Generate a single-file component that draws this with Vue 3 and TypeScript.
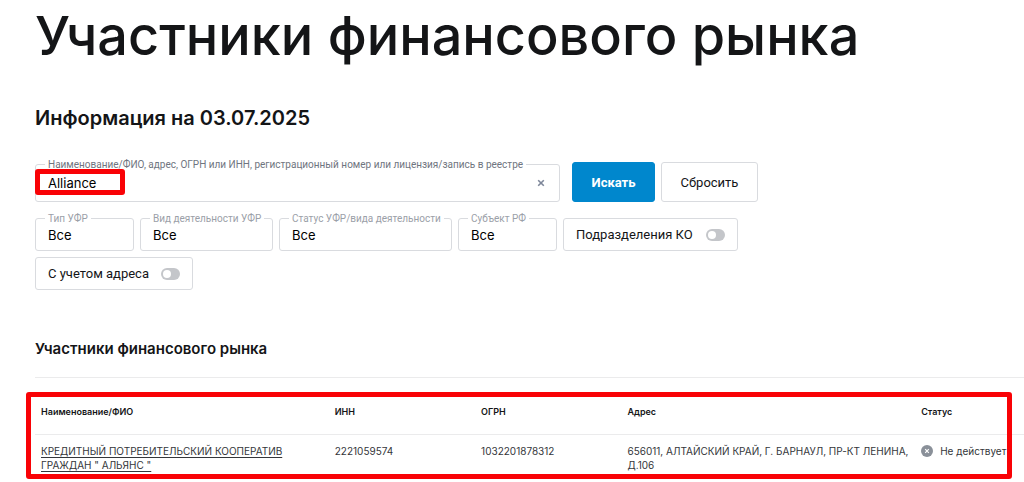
<script setup lang="ts">
import { ref } from 'vue'

interface Filter {
  id: string
  label: string
  size: string
}

interface Participant {
  name: string
  inn: string
  ogrn: string
  address: string
  status: string
}

const query = ref('Alliance')
const withBranches = ref(false)
const withAddress = ref(false)

const filters: Filter[] = [
  { id: 'type', label: 'Тип УФР', size: 'small' },
  { id: 'activity', label: 'Вид деятельности УФР', size: 'medium' },
  { id: 'status', label: 'Статус УФР/вида деятельности', size: 'large' },
  { id: 'region', label: 'Субъект РФ', size: 'small' },
]

const participants: Participant[] = [
  {
    name: 'КРЕДИТНЫЙ ПОТРЕБИТЕЛЬСКИЙ КООПЕРАТИВ ГРАЖДАН " АЛЬЯНС "',
    inn: '2221059574',
    ogrn: '1032201878312',
    address: '656011, АЛТАЙСКИЙ КРАЙ, Г. БАРНАУЛ, ПР-КТ ЛЕНИНА, Д.106',
    status: 'Не действует',
  },
]
</script>

<template>
  <main class="page">
    <h1 class="title">Участники финансового рынка</h1>
    <h2 class="date">Информация на 03.07.2025</h2>

    <form class="search" @submit.prevent>
      <div class="search-row">
        <div class="field query">
          <label class="caption" for="query">Наименование/ФИО, адрес, ОГРН или ИНН, регистрационный номер или лицензия/запись в реестре</label>
          <input id="query" v-model="query" class="control" type="text" />
          <button class="clear" type="button" aria-label="Очистить" @click="query = ''">
            <svg viewBox="0 0 8 8" width="8" height="8"><path d="M1.2 1.2 6.8 6.8M6.8 1.2 1.2 6.8" /></svg>
          </button>
          <span class="mark mark-query"></span>
        </div>
        <div class="actions">
          <button class="button primary" type="submit">Искать</button>
          <button class="button" type="reset">Сбросить</button>
        </div>
      </div>

      <div class="filters">
        <div v-for="f in filters" :key="f.id" class="field" :class="f.size">
          <label class="caption light" :for="f.id">{{ f.label }}</label>
          <select :id="f.id" class="control"><option>Все</option></select>
        </div>
        <label class="toggle branches">
          Подразделения КО
          <input v-model="withBranches" class="switch" type="checkbox" />
        </label>
        <label class="toggle">
          С учетом адреса
          <input v-model="withAddress" class="switch" type="checkbox" />
        </label>
      </div>
    </form>

    <section class="results">
      <h3 class="subtitle">Участники финансового рынка</h3>
      <div class="table-area">
        <table class="table">
          <thead>
            <tr>
              <th class="wide">Наименование/ФИО</th>
              <th class="narrow">ИНН</th>
              <th class="narrow">ОГРН</th>
              <th class="wide">Адрес</th>
              <th>Статус</th>
            </tr>
          </thead>
          <tbody>
            <tr v-for="p in participants" :key="p.ogrn">
              <td><a href="#">{{ p.name }}</a></td>
              <td>{{ p.inn }}</td>
              <td>{{ p.ogrn }}</td>
              <td>{{ p.address }}</td>
              <td>
                <span class="status">
                  <svg viewBox="0 0 12 12" width="12" height="12">
                    <circle cx="6" cy="6" r="6" />
                    <path d="M4.2 4.2 7.8 7.8M7.8 4.2 4.2 7.8" />
                  </svg>
                  {{ p.status }}
                </span>
              </td>
            </tr>
          </tbody>
        </table>
        <span class="mark mark-table"></span>
      </div>
    </section>
  </main>
</template>

<style>
body {
  background: #fff;
  overflow: hidden;
}
</style>

<style scoped>
.page,
.page * {
  box-sizing: border-box;
}

.page {
  padding: 4px 0 4px 35px;
  font-family: Inter, "Liberation Sans", sans-serif;
  color: #141517;
}

.title {
  margin: 0;
  font-size: 54px;
  line-height: 64px;
  font-weight: 500;
}

.date {
  margin: 36px 0 0;
  font-size: 20px;
  line-height: 28px;
  font-weight: 600;
}

.search {
  margin-top: 30px;
}

.search-row {
  display: flex;
  align-items: flex-end;
  gap: 12px;
}

.field {
  position: relative;
}

.query {
  flex: 0 1 525px;
}

.caption {
  position: absolute;
  top: -5px;
  left: 10px;
  padding: 0 3px;
  background: #fff;
  color: #6f7580;
  font-family: Roboto, "Liberation Sans", sans-serif;
  font-size: 10px;
  line-height: 12px;
  white-space: nowrap;
}

.light {
  color: #9ba0a8;
}

.control {
  display: block;
  width: 100%;
  height: 33px;
  padding: 0 12px;
  border: 1px solid #d9dbdf;
  border-radius: 3px;
  background: #fff;
  color: #000;
  font-family: inherit;
  font-size: 13px;
  appearance: none;
  outline: none;
}

.query .control {
  height: 38px;
}

.clear {
  position: absolute;
  top: 11px;
  right: 11px;
  display: flex;
  padding: 4px;
  border: 0;
  background: none;
}

.clear svg {
  fill: none;
  stroke: #7d8699;
  stroke-width: 1.6;
}

.actions {
  display: flex;
  gap: 6px;
}

.button {
  height: 40px;
  width: 97px;
  padding: 0;
  border: 1px solid #d9dbdf;
  border-radius: 3px;
  background: #fff;
  color: #141517;
  font-family: Roboto, "Liberation Sans", sans-serif;
  font-size: 13px;
}

.primary {
  width: 83px;
  border-color: #0087cd;
  background: #0087cd;
  color: #fff;
  font-weight: 700;
}

.filters {
  display: flex;
  flex-wrap: wrap;
  gap: 6px;
  margin-top: 16px;
  padding-right: 240px;
}

.small {
  width: 99px;
}

.medium {
  width: 133px;
}

.large {
  width: 173px;
}

.toggle {
  display: flex;
  align-items: center;
  justify-content: space-between;
  width: 158px;
  height: 33px;
  padding: 0 12px;
  border: 1px solid #d9dbdf;
  border-radius: 3px;
  font-family: Roboto, "Liberation Sans", sans-serif;
  font-size: 13px;
  white-space: nowrap;
}

.branches {
  width: 175px;
}

.switch {
  display: flex;
  align-items: center;
  width: 19px;
  height: 12px;
  margin: 0;
  padding: 2px;
  border-radius: 6px;
  background: #c4c6ca;
  appearance: none;
}

.switch::before {
  content: "";
  width: 8px;
  height: 8px;
  border-radius: 50%;
  background: #fff;
}

.switch:checked {
  justify-content: flex-end;
  background: #0087cd;
}

.results {
  margin-top: 48px;
}

.subtitle {
  margin: 0;
  font-size: 15px;
  line-height: 22px;
  font-weight: 600;
}

.table-area {
  position: relative;
  margin-top: 17px;
}

.table {
  width: 100%;
  table-layout: fixed;
  border-collapse: collapse;
  border-top: 1px solid #ebebec;
  text-align: left;
  font-size: 10px;
  line-height: 14px;
}

.wide {
  width: 29.7%;
}

.narrow {
  width: 14.8%;
}

th {
  height: 57px;
  padding: 12px 0 0 6px;
  border-bottom: 1px solid #ebebec;
  font-size: 9px;
  font-weight: 600;
}

td {
  padding: 9px 0 9px 6px;
  color: #34363a;
  vertical-align: top;
}

td a {
  display: block;
  max-width: 270px;
  color: inherit;
  text-underline-offset: 2px;
}

.status {
  display: flex;
  align-items: center;
  gap: 7px;
  white-space: nowrap;
}

.status svg {
  flex: none;
  fill: #8a9099;
}

.status path {
  stroke: #fff;
  stroke-width: 1.2;
}

.mark {
  position: absolute;
  border: 5px solid #f90206;
  border-radius: 3px;
  pointer-events: none;
}

.mark-query {
  top: 5px;
  left: 0;
  width: 90px;
  height: 26px;
}

.mark-table {
  top: 15px;
  right: 12px;
  left: -9px;
  height: 87px;
}
</style>
